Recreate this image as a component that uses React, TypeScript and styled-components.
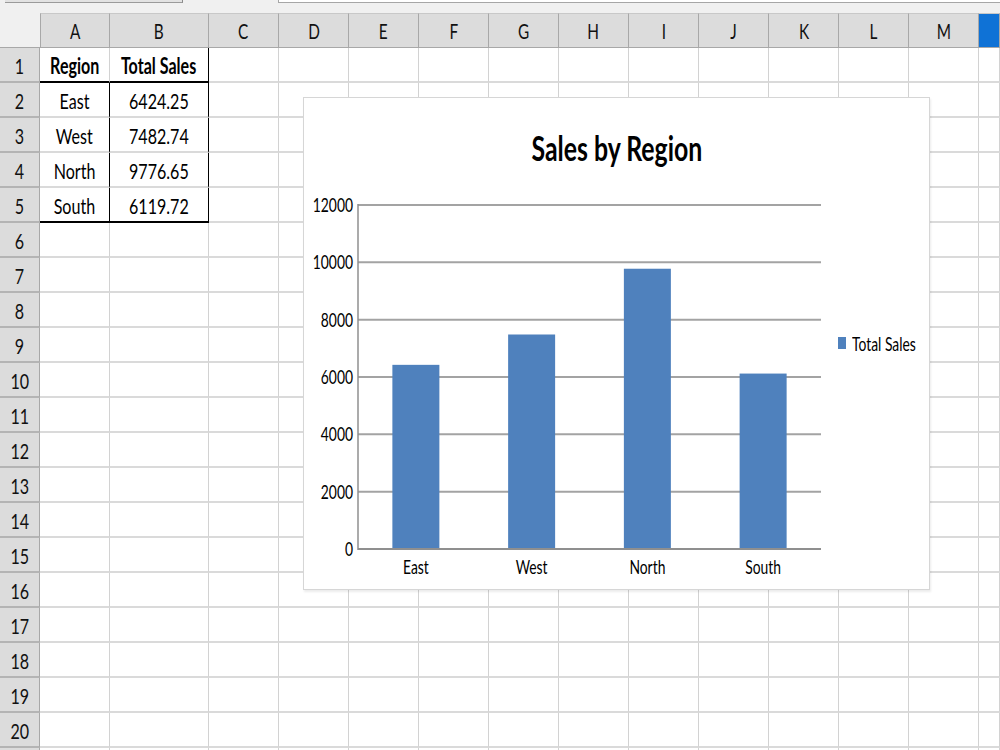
import React from "react";
import styled, { createGlobalStyle } from "styled-components";

const SQ = 0.73;
const FONT = `Lato, Carlito, "Open Sans", sans-serif`;

const Global = createGlobalStyle`
  html, body { margin: 0; padding: 0; background: #ffffff; overflow: hidden; }
  body { width: 1000px; height: 750px; font-family: ${FONT}; color: #000; }
`;

const Page = styled.div`
  position: relative;
  width: 1000px;
  height: 750px;
  overflow: hidden;
  background: #ffffff;
`;

const TopStrip = styled.div`
  display: flex;
  align-items: flex-start;
  height: 13px;
  background: #f0f0f0;
`;

const NameBox = styled.div`
  margin-left: 5px;
  width: 177px;
  height: 2px;
  background: #e2e2e2;
  border-bottom: 1px solid #9a9a9a;
  border-right: 1px solid #8a8a8a;
`;

const FormulaBox = styled.div`
  margin-left: 95px;
  flex: 1;
  height: 2px;
  background: #ffffff;
  border-left: 1px solid #a6a6a6;
  border-bottom: 1px solid #a6a6a6;
`;

const Grid = styled.div`
  display: grid;
  grid-template-columns: 40px 70px 99px repeat(11, 70px) 21px;
  grid-auto-rows: 35px;
`;

const Corner = styled.div`
  background: #f0f0f0;
  border-bottom: 1px solid #a8a8a8;
`;

const ColHead = styled.div<{ $active?: boolean; $first?: boolean }>`
  box-sizing: border-box;
  display: flex;
  align-items: center;
  justify-content: center;
  background: ${(p) => (p.$active ? "#0f72d6" : "#dcdcdc")};
  border-left: ${(p) => (p.$first ? "1px solid #a8a8a8" : "none")};
  border-right: 1px solid #a8a8a8;
  border-top: 1px solid #c8c8c8;
  border-bottom: 1px solid #a8a8a8;
  font-size: 21px;
  color: #111;
`;

const RowHead = styled.div`
  box-sizing: border-box;
  display: flex;
  align-items: center;
  justify-content: center;
  background: #dcdcdc;
  border-right: 1px solid #a8a8a8;
  border-bottom: 2px solid #b4b4b4;
  font-size: 22px;
  color: #111;
  padding-top: 1px;
`;

const Cell = styled.div<{ $br?: boolean; $bb?: boolean; $bold?: boolean }>`
  box-sizing: border-box;
  display: flex;
  align-items: center;
  justify-content: center;
  border-right: 1px solid ${(p) => (p.$br ? "#000" : "#d2d2d2")};
  border-bottom: 2px solid ${(p) => (p.$bb ? "#000" : "#dadada")};
  font-size: 22px;
  font-weight: ${(p) => (p.$bold ? 700 : 400)};
  padding-top: 1px;
`;

const Squish = styled.span<{ $origin?: string }>`
  display: inline-block;
  white-space: nowrap;
  transform: scaleX(${SQ});
  transform-origin: ${(p) => p.$origin || "center"};
`;

const Chart = styled.div`
  position: absolute;
  left: 303px;
  top: 97px;
  width: 627px;
  height: 493px;
  box-sizing: border-box;
  background: #ffffff;
  border: 1px solid #d6d6d6;
  box-shadow: 1px 2px 2px rgba(0, 0, 0, 0.08);
  display: flex;
  flex-direction: column;
  overflow: hidden;
`;

const Title = styled.div`
  height: 94px;
  box-sizing: border-box;
  padding-top: 30px;
  display: flex;
  justify-content: center;
  font-size: 34px;
  line-height: 40px;
  font-weight: 700;
`;

const ChartBody = styled.div`
  display: flex;
  align-items: flex-start;
`;

const PlotSvg = styled.svg`
  flex-shrink: 0;
  display: block;
`;

const Legend = styled.div`
  flex-shrink: 0;
  margin-left: 6px;
  margin-top: 144px;
  display: flex;
  align-items: center;
  height: 14px;
  gap: 6px;
  font-size: 19px;
`;

const LegendKey = styled.div`
  width: 8px;
  height: 12px;
  background: #4f81bd;
`;

const cols = ["A", "B", "C", "D", "E", "F", "G", "H", "I", "J", "K", "L", "M"];
const data: [string, string][] = [
  ["East", "6424.25"],
  ["West", "7482.74"],
  ["North", "9776.65"],
  ["South", "6119.72"],
];
const values = [6424.25, 7482.74, 9776.65, 6119.72];

const PLOT_L = 54;
const PLOT_R = 517;
const Y0 = 357;
const Y12 = 13;
const BAR_W = 47;

function Plot() {
  const step = (Y0 - Y12) / 6;
  const catW = (PLOT_R - PLOT_L) / 4;
  const yFor = (v: number) => Y0 - (v / 12000) * (Y0 - Y12);
  return (
    <PlotSvg width={528} height={395} viewBox="0 0 528 395">
      {[0, 1, 2, 3, 4, 5, 6].map((i) => {
        const y = Y0 - i * step;
        return (
          <g key={i}>
            <line x1={PLOT_L} x2={PLOT_R} y1={y} y2={y} stroke="#a3a3a3" strokeWidth={2} />
            <text
              transform={`translate(49 ${y}) scale(${SQ} 1)`}
              textAnchor="end"
              dominantBaseline="central"
              fontFamily={FONT}
              fontSize={19}
              fill="#000"
            >
              {i * 2000}
            </text>
          </g>
        );
      })}
      {values.map((v, i) => {
        const x = PLOT_L + i * catW + (catW - BAR_W) / 2;
        const y = yFor(v);
        return <rect key={i} x={x} y={y} width={BAR_W} height={Y0 - y} fill="#4f81bd" />;
      })}
      <line x1={PLOT_L} x2={PLOT_L} y1={Y12 - 1} y2={Y0 + 1} stroke="#8f8f8f" strokeWidth={1.5} />
      <line x1={PLOT_L} x2={PLOT_R} y1={Y0} y2={Y0} stroke="#8f8f8f" strokeWidth={2} />
      {data.map(([name], i) => (
        <text
          key={name}
          transform={`translate(${PLOT_L + i * catW + catW / 2} 375) scale(${SQ} 1)`}
          textAnchor="middle"
          dominantBaseline="central"
          fontFamily={FONT}
          fontSize={19}
          fill="#000"
        >
          {name}
        </text>
      ))}
    </PlotSvg>
  );
}

export default function App() {
  const rows: React.ReactNode[] = [];
  for (let r = 1; r <= 21; r++) {
    rows.push(
      <RowHead key={`rh${r}`}>
        {r <= 20 && <Squish>{r}</Squish>}
      </RowHead>
    );
    for (let c = 0; c < 14; c++) {
      let text: string | null = null;
      let br = false;
      let bb = false;
      let bold = false;
      if (r === 1 && c === 0) { text = "Region"; bold = true; bb = true; }
      if (r === 1 && c === 1) { text = "Total Sales"; bold = true; bb = true; br = true; }
      if (r >= 2 && r <= 5) {
        if (c === 0) { text = data[r - 2][0]; br = true; }
        if (c === 1) { text = data[r - 2][1]; br = true; }
        if (r === 5 && c <= 1) bb = true;
      }
      rows.push(
        <Cell key={`c${r}-${c}`} $br={br} $bb={bb} $bold={bold}>
          {text && <Squish>{text}</Squish>}
        </Cell>
      );
    }
  }

  return (
    <Page>
      <Global />
      <TopStrip>
        <NameBox />
        <FormulaBox />
      </TopStrip>
      <Grid>
        <Corner />
        {cols.map((c, i) => (
          <ColHead key={c} $first={i === 0}>
            <Squish>{c}</Squish>
          </ColHead>
        ))}
        <ColHead $active />
        {rows}
      </Grid>
      <Chart>
        <Title>
          <Squish>Sales by Region</Squish>
        </Title>
        <ChartBody>
          <Plot />
          <Legend>
            <LegendKey />
            <Squish $origin="left">Total Sales</Squish>
          </Legend>
        </ChartBody>
      </Chart>
    </Page>
  );
}
